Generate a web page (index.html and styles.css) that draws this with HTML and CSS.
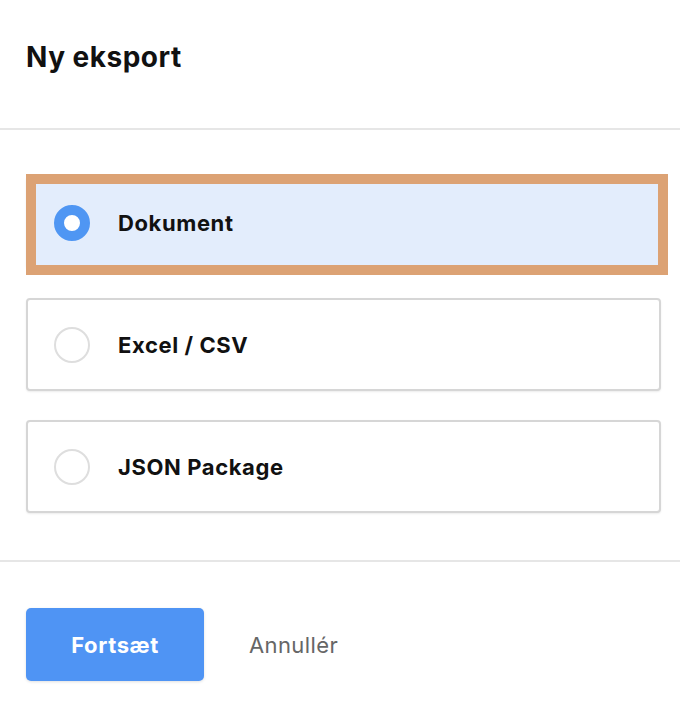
FILE: index.html
```html
<!DOCTYPE html>
<html lang="da">
<head>
<meta charset="utf-8">
<title>Ny eksport</title>
<link rel="stylesheet" href="styles.css">
</head>
<body>
<div class="dialog">
  <header class="head">
    <h1 class="title">Ny eksport</h1>
  </header>
  <section class="options">
    <label class="option selected">
      <span class="radio on"></span>
      <span class="label">Dokument</span>
    </label>
    <label class="option">
      <span class="radio"></span>
      <span class="label">Excel / CSV</span>
    </label>
    <label class="option">
      <span class="radio"></span>
      <span class="label">JSON Package</span>
    </label>
  </section>
  <footer class="foot">
    <button class="btn-primary">Fortsæt</button>
    <button class="btn-link">Annullér</button>
  </footer>
</div>
</body>
</html>
```
FILE: styles.css
```css
* { box-sizing: border-box; }
html, body { margin: 0; padding: 0; background: #fff; }
body {
  font-family: "Inter", "Open Sans", "Liberation Sans", sans-serif;
  color: #111;
  width: 680px;
  height: 708px;
  overflow: hidden;
}
.head {
  height: 130px;
  padding: 37px 26px 0;
  border-bottom: 2px solid #e6e6e6;
}
.title {
  margin: 0;
  font-size: 28px;
  font-weight: 700;
  line-height: 40px;
  letter-spacing: 0.5px;
  color: #111;
}
.options {
  padding: 46px 19px 47px 26px;
  display: flex;
  flex-direction: column;
  gap: 29px;
  border-bottom: 2px solid #e6e6e6;
}
.option {
  position: relative;
  height: 93px;
  display: flex;
  align-items: center;
  padding-left: 26px;
  border: 2px solid #d6d6d6;
  border-radius: 4px;
  box-shadow: 0 1px 2px rgba(0,0,0,0.08);
  background: #fff;
}
.option.selected {
  background: #e3edfc;
  border-color: #e3edfc;
}
.option.selected::after {
  content: "";
  position: absolute;
  top: -4px;
  left: -2px;
  right: -9px;
  bottom: -8px;
  border: 10px solid #dca274;
}
.radio {
  width: 36px;
  height: 36px;
  border-radius: 50%;
  border: 2px solid #dedede;
  background: #fff;
  flex: none;
}
.radio.on {
  border: 10px solid #4f96f3;
  background: #fff;
}
.label {
  margin-left: 28px;
  font-size: 22px;
  font-weight: 700;
  letter-spacing: 0.6px;
  color: #111;
}
.foot {
  padding: 46px 26px 0;
  display: flex;
  align-items: center;
}
.btn-primary {
  width: 178px;
  height: 73px;
  border: none;
  border-radius: 5px;
  background: #4f94f4;
  color: #fff;
  font-family: inherit;
  font-size: 22px;
  font-weight: 700;
  letter-spacing: 0.6px;
  box-shadow: 0 1px 3px rgba(0,0,0,0.12);
}
.btn-link {
  margin-left: 45px;
  border: none;
  background: none;
  padding: 0;
  font-family: inherit;
  font-size: 22px;
  letter-spacing: 0.4px;
  color: #666;
}
```
